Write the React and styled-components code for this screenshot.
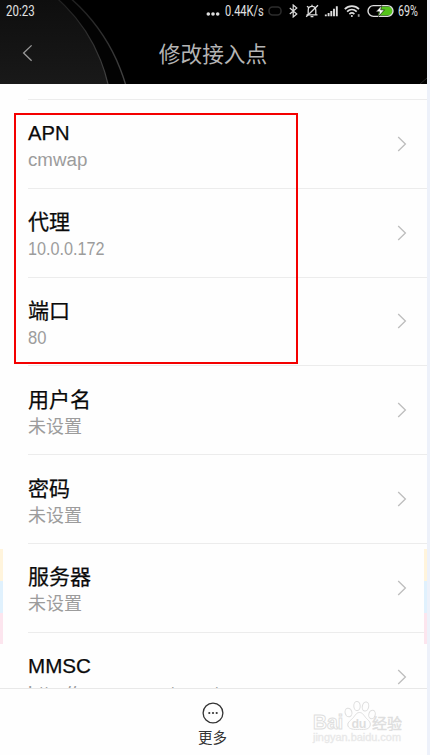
import React from "react";
import styled, { createGlobalStyle } from "styled-components";

const GlobalStyle = createGlobalStyle`
  * {
    box-sizing: border-box;
  }
  body {
    margin: 0;
    background: #edf1fa;
    font-family: "Liberation Sans", "Noto Sans CJK SC", sans-serif;
  }
`;

const Screen = styled.div`
  position: relative;
  display: flex;
  flex-direction: column;
  width: 427px;
  height: 755px;
  overflow: hidden;
  background: #fefefe;
`;

const Header = styled.header`
  position: relative;
  flex: none;
  height: 84px;
  background: #000;
  overflow: hidden;
`;

const Rings = styled.svg`
  position: absolute;
  top: 0;
  left: 0;
`;

const StatusBar = styled.div`
  position: relative;
  display: flex;
  align-items: center;
  height: 22px;
  padding-left: 6px;
  color: #e2e2e2;
`;

const StatusText = styled.span`
  flex: none;
  display: block;
  width: ${(props) => props.$width}px;
  margin-right: ${(props) => props.$gap || 0}px;
  font-family: Roboto, sans-serif;
  font-size: 14px;
  line-height: 22px;
  white-space: nowrap;
  transform: scaleX(${(props) => props.$scale});
  transform-origin: left center;
`;

const StatusIcon = styled.svg`
  flex: none;
  display: block;
  margin-right: ${(props) => props.$gap}px;
  fill: none;
  stroke: #dedede;
`;

const TitleBar = styled.div`
  position: relative;
  display: grid;
  grid-template-columns: 60px 1fr 60px;
  align-items: center;
  height: 62px;
`;

const BackIcon = styled.svg`
  margin-left: 22px;
  fill: none;
  stroke: #999;
  stroke-width: 1.3;
`;

const Title = styled.h1`
  margin: 3px 1px 0 0;
  font-size: 21.7px;
  font-weight: 400;
  line-height: 32px;
  text-align: center;
  color: #b4b4b4;
`;

const List = styled.ul`
  flex: 1;
  min-height: 0;
  margin: 0;
  padding: 15px 0 0 28px;
  overflow: hidden;
  list-style: none;
`;

const Row = styled.li`
  display: flex;
  align-items: center;
  justify-content: space-between;
  height: 88.8px;
  padding-right: 20px;
  border-top: 1px solid #ececec;
`;

const RowText = styled.div`
  height: 54px;
  margin-top: 5px;
`;

const Name = styled.div`
  font-size: 21px;
  line-height: 27px;
  color: #0a0a0a;
  white-space: nowrap;
  -webkit-text-stroke: 0.25px #0a0a0a;
  transform: scaleX(${(props) => props.$scale || 1});
  transform-origin: left center;
`;

const Value = styled.div`
  font-size: 18px;
  line-height: 28px;
  color: #9c9c9c;
  white-space: nowrap;
  transform: scaleX(${(props) => props.$scale || 1});
  transform-origin: left center;
`;

const Arrow = styled.svg`
  fill: none;
  stroke: #bdbdbd;
  stroke-width: 1.3;
`;

const Footer = styled.footer`
  display: flex;
  flex: none;
  flex-direction: column;
  align-items: center;
  height: 67px;
  padding: 13px 2px 0 0;
  border-top: 1px solid #e8e8e8;
  color: #333;
`;

const MoreLabel = styled.span`
  margin-top: 3px;
  font-size: 14.5px;
  line-height: 22px;
`;

const Marker = styled.div`
  position: absolute;
  top: 113px;
  left: 14px;
  width: 284px;
  height: 251px;
  border: 2px solid #f40000;
`;

const SideTabs = styled.div`
  position: absolute;
  top: 549px;
  left: ${(props) => props.$left}px;
  width: 3px;
  height: 95px;
  background: linear-gradient(
    #fff4dc 0 32px,
    #e0f1fd 32px 64px,
    #fce5ee 64px
  );
`;

const Watermark = styled.svg`
  position: absolute;
  top: 697px;
  left: 308px;
`;

const settings = [
  { name: "APN", value: "cmwap", nameScale: 0.96, valueScale: 1.04 },
  { name: "代理", value: "10.0.0.172", valueScale: 0.9 },
  { name: "端口", value: "80", valueScale: 0.92 },
  { name: "用户名", value: "未设置" },
  { name: "密码", value: "未设置" },
  { name: "服务器", value: "未设置" },
  {
    name: "MMSC",
    value: "http://mmsc.monternet.com",
    nameScale: 0.98,
    valueScale: 1.07,
  },
];

function StatusIcons() {
  return (
    <>
      <StatusIcon width="14" height="14" $gap={5}>
        <g fill="#dedede" stroke="none">
          <circle cx="2.3" cy="10" r="1.8" />
          <circle cx="7" cy="10" r="1.8" />
          <circle cx="11.7" cy="10" r="1.8" />
        </g>
      </StatusIcon>
      <StatusText $width={39} $gap={4} $scale={0.79}>
        0.44K/s
      </StatusText>
      <StatusIcon width="14" height="14" $gap={7}>
        <rect x="1" y="3" width="12" height="8" rx="3.5" stroke="#2c2c2c" strokeWidth="1.5" />
      </StatusIcon>
      <StatusIcon width="9" height="14" $gap={7} strokeWidth="1.2">
        <path d="M.8 4 7.8 10 4.2 13V1l3.6 3L.8 10" />
      </StatusIcon>
      <StatusIcon width="14" height="14" $gap={5} strokeWidth="1.3">
        <path d="M1.5 10.8h11M3.2 10.5V6.2C3.2 3.8 4.7 2.3 7 2.3s3.8 1.5 3.8 3.9v4.3M7 2.3V.8M5.6 12.6h2.8" />
        <path d="M13 1.2 1.2 12.8M2 2.2l2 1.6" />
      </StatusIcon>
      <StatusIcon width="14" height="14" $gap={6} strokeWidth="1.9">
        <path d="M1.8 12.2v-1.7M4.6 12.2V9M7.3 12.2V7M10 12.2V4.700M12.800 12.200V2.200" />
      </StatusIcon>
      <StatusIcon width="17" height="14" $gap={6} strokeWidth="1.7">
        <path d="M.8 5.2c4-4 10.2-4 14.2 0M3.1 7.7c2.8-2.7 6.8-2.7 9.6 0M5.4 10.1c1.5-1.4 3.500-1.400 5 0" />
        <circle cx="7.9" cy="12" r="1" fill="#dedede" stroke="none" />
        <path d="M14.7 10.2v2.6" stroke="#999" strokeWidth="1.8" />
      </StatusIcon>
      <StatusIcon width="27" height="14" $gap={4}>
        <path d="M13 2.5h8.2a4.5 4.5 0 0 1 0 9H11z" fill="#55c51c" stroke="none" />
        <rect x="1" y="1.6" width="25" height="10.8" rx="5.4" strokeWidth="1.4" />
        <path
          d="M14.7 1.5 8.8 7.8h3.7l-1 4.8 6-6.8h-3.8z"
          fill="#fff"
          stroke="#000"
          strokeWidth=".6"
        />
      </StatusIcon>
    </>
  );
}

function App() {
  return (
    <>
      <GlobalStyle />
      <Screen>
        <Header>
          <Rings width="427" height="84">
            <defs>
              <linearGradient id="ring" x1="0" y1="0" x2="0" y2="84" gradientUnits="userSpaceOnUse">
                <stop offset="0" stopColor="#202020" />
                <stop offset="1" stopColor="#444" />
              </linearGradient>
              <linearGradient id="disc" x1="0" y1="0" x2="0" y2="84" gradientUnits="userSpaceOnUse">
                <stop offset="0" stopColor="#0e0e0e" />
                <stop offset="1" stopColor="#191919" />
              </linearGradient>
            </defs>
            <circle cx="-50" cy="136" r="183" fill="#030303" stroke="url(#ring)" strokeWidth="1.4" />
            <circle cx="-50" cy="120" r="162" fill="url(#disc)" stroke="url(#ring)" strokeWidth="1.2" />
            <path d="M420 84l7-6" stroke="#222" />
          </Rings>
          <StatusBar>
            <StatusText $width={28} $gap={172} $scale={0.82}>
              20:23
            </StatusText>
            <StatusIcons />
            <StatusText $width={22} $scale={0.77}>
              69%
            </StatusText>
          </StatusBar>
          <TitleBar>
            <BackIcon width="11" height="18">
              <path d="M9.6 1.4 1.6 9l8 7.8" />
            </BackIcon>
            <Title>修改接入点</Title>
          </TitleBar>
        </Header>
        <List>
          {settings.map((item) => (
            <Row key={item.name}>
              <RowText>
                <Name $scale={item.nameScale}>{item.name}</Name>
                <Value $scale={item.valueScale}>{item.value}</Value>
              </RowText>
              <Arrow width="10" height="16">
                <path d="M1.2 1 8.4 8l-7.2 7" />
              </Arrow>
            </Row>
          ))}
        </List>
        <Footer>
          <svg width="22" height="22" fill="none" stroke="#333">
            <circle cx="11" cy="11" r="9.9" strokeWidth="1.3" />
            <g fill="#333" stroke="none">
              <circle cx="7.3" cy="11" r="1.1" />
              <circle cx="11" cy="11" r="1.1" />
              <circle cx="14.7" cy="11" r="1.1" />
            </g>
          </svg>
          <MoreLabel>更多</MoreLabel>
        </Footer>
        <Marker />
        <SideTabs $left={0} />
        <SideTabs $left={424} />
        <Watermark width="98" height="50" fill="#fefefe" stroke="#dedede">
          <text
            x="5"
            y="32"
            fontSize="20"
            fontWeight="700"
            textLength="30"
            lengthAdjust="spacingAndGlyphs"
          >
            Bai
          </text>
          <g strokeWidth="1">
            <ellipse cx="40.5" cy="15.5" rx="3.4" ry="4.3" transform="rotate(-15 40.5 15.5)" />
            <ellipse cx="49" cy="9" rx="3.2" ry="4.6" transform="rotate(-4 49 9)" />
            <ellipse cx="57.5" cy="9.5" rx="3.2" ry="4.6" transform="rotate(12 57.5 9.5)" />
            <ellipse cx="64" cy="17.5" rx="3.2" ry="4.3" transform="rotate(15 64 17.5)" />
            <path d="M51.500 15.500c3.500 0 4.500 3.500 7 6 3 2.700 4.500 4.500 3.500 7.500s-4.500 3.800-10.500 3.300c-6 .5-10.500-.3-11.500-3.300s1.500-4.800 4.500-7.500c2.500-2.500 3.500-6 7-6z" />
          </g>
          <text x="43.500" y="31" fontSize="12.500" fontWeight="700" textLength="15" fill="#dedede" stroke="none">
            du
          </text>
          <text
            x="64"
            y="31.500"
            fontSize="15"
            fontWeight="400"
            textLength="30"
            fill="#dedede"
            strokeWidth=".4"
          >
            经验
          </text>
          <text
            x="5"
            y="44"
            fontSize="10.500"
            textLength="88"
            lengthAdjust="spacingAndGlyphs"
            fill="#e8e8e8"
            stroke="#e8e8e8"
            strokeWidth=".3"
          >
            jingyan.baidu.com
          </text>
        </Watermark>
      </Screen>
    </>
  );
}

export default App;
